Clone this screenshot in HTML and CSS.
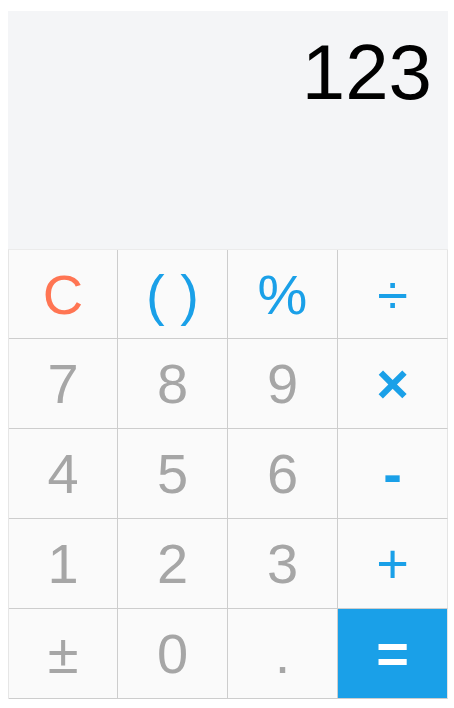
FILE: index.html
```html
<!DOCTYPE html>
<html>
<head>
<meta charset="utf-8">
<link rel="stylesheet" href="styles.css">
</head>
<body>
<div class="calc">
  <div class="display">123</div>
  <div class="keys">
    <div class="key clear">C</div>
    <div class="key op">( )</div>
    <div class="key op">%</div>
    <div class="key op">÷</div>
    <div class="key">7</div>
    <div class="key">8</div>
    <div class="key">9</div>
    <div class="key op strong">×</div>
    <div class="key">4</div>
    <div class="key">5</div>
    <div class="key">6</div>
    <div class="key op strong">-</div>
    <div class="key">1</div>
    <div class="key">2</div>
    <div class="key">3</div>
    <div class="key op">+</div>
    <div class="key">±</div>
    <div class="key">0</div>
    <div class="key">.</div>
    <div class="key equals">=</div>
  </div>
</div>
</body>
</html>
```

FILE: styles.css
```css
html, body {
  margin: 0;
  padding: 0;
  background: #ffffff;
}
body {
  padding: 11px 8px 0 8px;
  font-family: "Liberation Sans", Arial, sans-serif;
}
.calc {
  width: 440px;
}
.display {
  height: 238px;
  box-sizing: border-box;
  background: #f4f5f7;
  padding: 16px 16px 0 0;
  text-align: right;
  font-size: 78px;
  color: #000;
}
.keys {
  display: grid;
  grid-template-columns: 109px 110px 110px 110px;
  border-top: 1px solid #ebebeb;
  border-left: 1px solid #e6e6e6;
  width: 440px;
  box-sizing: border-box;
}
.key {
  height: 90px;
  box-sizing: border-box;
  border-right: 1px solid #cdcdcd;
  border-bottom: 1px solid #cdcdcd;
  background: #fafafa;
  display: flex;
  align-items: center;
  justify-content: center;
  font-size: 56px;
  color: #a6a6a6;
}
.key:nth-child(-n+4) {
  height: 89px;
}
.key:nth-child(4n) {
  border-right-color: #e4e4e4;
}
.op {
  color: #1aa0e8;
}
.strong {
  font-weight: bold;
}
.clear {
  color: #ff7553;
}
.equals {
  background: #1aa0e8;
  color: #ffffff;
  font-weight: bold;
  border-left: 1px solid #cdcdcd;
  margin-left: -1px;
}
```
